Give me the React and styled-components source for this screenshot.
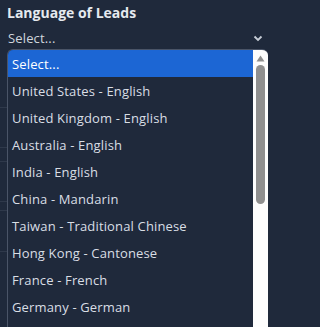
import styled, { createGlobalStyle } from 'styled-components';

const GlobalStyle = createGlobalStyle`
  html, body {
    margin: 0;
    padding: 0;
    background: #1f293b;
  }
  body {
    font-family: 'Open Sans', 'Noto Sans', sans-serif;
  }
`;

const languages = [
  'Select...',
  'United States - English',
  'United Kingdom - English',
  'Australia - English',
  'India - English',
  'China - Mandarin',
  'Taiwan - Traditional Chinese',
  'Hong Kong - Cantonese',
  'France - French',
  'Germany - German',
];

const Page = styled.div`
  width: 273px;
  height: 327px;
  overflow: hidden;
  position: relative;
  background: #1f293b;
  padding: 3px 0 0 7px;
  box-sizing: border-box;
`;

const Title = styled.div`
  font-size: 14px;
  font-weight: 700;
  color: #e5e9ef;
  line-height: 20px;
`;

const SelectRow = styled.div`
  display: flex;
  align-items: center;
  justify-content: space-between;
  height: 24px;
  padding: 0 10px 0 1px;
  margin-top: 3px;
  font-size: 13px;
  letter-spacing: 0.15px;
  color: #d0d6de;
`;

const Listbox = styled.div`
  position: absolute;
  left: 7px;
  top: 49px;
  width: 260px;
  height: 290px;
  display: flex;
  border-radius: 6px 6px 0 0;
  border-left: 1px solid #4a5467;
  border-top: 1px solid #4a5467;
  overflow: hidden;
  background: #1f293b;
`;

const Options = styled.div`
  flex: 1;
  display: flex;
  flex-direction: column;
`;

const Option = styled.div`
  height: 27px;
  flex-shrink: 0;
  display: flex;
  align-items: center;
  padding-left: 4px;
  font-size: 13px;
  letter-spacing: 0.15px;
  color: ${(p) => (p.$active ? '#ffffff' : '#d9dee5')};
  background: ${(p) => (p.$active ? '#1c66d4' : 'transparent')};
`;

const Scrollbar = styled.div`
  width: 15px;
  background: #fdfdfd;
  display: flex;
  flex-direction: column;
  align-items: center;
  padding-top: 5px;
  gap: 3px;
`;

const Thumb = styled.div`
  width: 9px;
  height: 139px;
  border-radius: 5px;
  background: #8f8f8f;
`;

const BackLines = styled.div`
  position: absolute;
  left: 0;
  top: 0;
  width: 7px;
  height: 100%;
`;

const BackLine = styled.div`
  position: absolute;
  left: 0;
  width: 7px;
  height: 1px;
  background: #2f394b;
`;

export default function App() {
  return (
    <>
      <GlobalStyle />
      <Page>
        <BackLines>
          {[107, 147, 161, 201, 210, 251].map((y) => (
            <BackLine key={y} style={{ top: y }} />
          ))}
        </BackLines>
        <Title>Language of Leads</Title>
        <SelectRow>
          <span>Select...</span>
          <svg width="10" height="7" viewBox="0 0 10 7">
            <path d="M1.5 1.5 L5 5 L8.5 1.5" stroke="#c7cdd6" strokeWidth="1.8" fill="none" />
          </svg>
        </SelectRow>
        <Listbox>
          <Options>
            {languages.map((l, i) => (
              <Option key={l} $active={i === 0}>
                {l}
              </Option>
            ))}
          </Options>
          <Scrollbar>
            <svg width="9" height="7" viewBox="0 0 9 7">
              <path d="M0.5 6.5 L4.5 0.5 L8.5 6.5 Z" fill="#8f8f8f" />
            </svg>
            <Thumb />
          </Scrollbar>
        </Listbox>
      </Page>
    </>
  );
}
